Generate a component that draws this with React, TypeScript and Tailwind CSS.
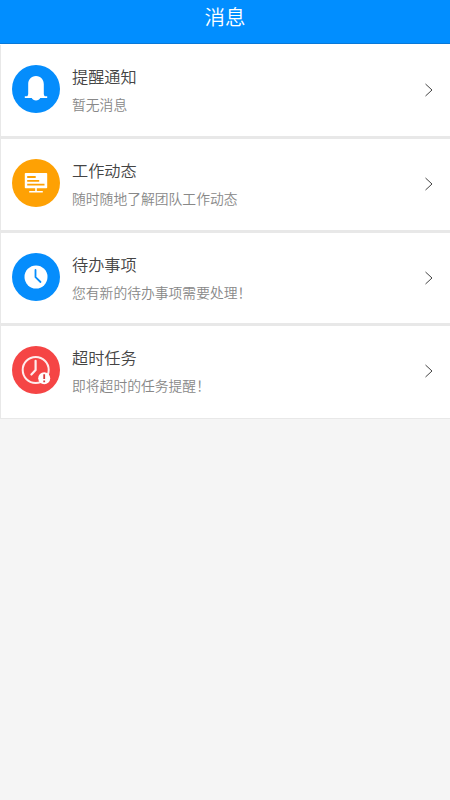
import type { ReactNode } from "react";

interface MessageProps {
    title: string;
    text: string;
    icon: ReactNode;
}

const BellIcon = () => (
    <svg className="block size-12" viewBox="0 0 48 48">
        <circle cx="24" cy="24" r="24" fill="#058dfc" />
        <path d="M24 11c-5 0-7.800 3.700-7.800 8.200v9.800c0 1-.4 1.700-1 2.200h-2.400v1.800h6.900c.8 1.500 2.300 2.400 4.300 2.400s3.500-.9 4.300-2.400H35.200v-1.800h-2.400c-.6-.5-1-1.200-1-2.200V19.200c0-4.500-2.800-8.200-7.800-8.200z" fill="#fff" />
    </svg>
);

const BoardIcon = () => (
    <svg className="block size-12" viewBox="0 0 48 48">
        <circle cx="24" cy="24" r="24" fill="#fea104" />
        <rect x="12.800" y="14" width="22.400" height="15.200" rx="0.8" fill="#fff" />
        <path d="M15.200 18h8.500M15.200 21.800h12M15.200 25.700h17.300" stroke="#fea104" strokeWidth="1.800" />
        <path d="M24 29v3.500M17.200 32.800h13.600" stroke="#fff" strokeWidth="1.600" />
    </svg>
);

const ClockIcon = () => (
    <svg className="block size-12" viewBox="0 0 48 48">
        <circle cx="24" cy="24" r="24" fill="#058dfc" />
        <circle cx="24" cy="24" r="11.500" fill="#fff" />
        <path d="M23.500 17v7.200l5 4.800" fill="none" stroke="#058dfc" strokeWidth="1.800" strokeLinecap="round" strokeLinejoin="round" />
    </svg>
);

const OvertimeIcon = () => (
    <svg className="block size-12" viewBox="0 0 48 48">
        <circle cx="24" cy="24" r="24" fill="#f54545" />
        <circle cx="23.700" cy="24" r="13" fill="none" stroke="#fff" strokeOpacity="0.9" strokeWidth="2" />
        <path d="M23.600 14.800v9.200l-4.200 4.500" fill="none" stroke="#fff" strokeOpacity="0.9" strokeWidth="2.200" strokeLinecap="round" strokeLinejoin="round" />
        <circle cx="32.200" cy="32.300" r="6" fill="#fff" />
        <path d="M32.200 28.200v4.800M32.200 34.400v1.900" stroke="#d83a3a" strokeWidth="1.800" />
    </svg>
);

const messages: MessageProps[] = [
    { title: "提醒通知", text: "暂无消息", icon: <BellIcon /> },
    { title: "工作动态", text: "随时随地了解团队工作动态", icon: <BoardIcon /> },
    { title: "待办事项", text: "您有新的待办事项需要处理！", icon: <ClockIcon /> },
    { title: "超时任务", text: "即将超时的任务提醒！", icon: <OvertimeIcon /> },
];

const MessageItem = ({ title, text, icon }: MessageProps) => {
    return (
        <li className="flex h-[93.800px] items-start border-b-[3px] border-l border-[#e8e8e8] bg-white pt-5 pr-4 pl-[11px] last:h-[93px] last:border-b">
            {icon}
            <div className="ml-3 flex-1">
                <h4 className="-mt-px text-[16.200px] leading-6 text-[#444]">{title}</h4>
                <p className="mt-1.5 text-[13.800px] leading-5 text-[#888]">{text}</p>
            </div>
            <svg className="mt-[18px] block h-[14px] w-[9px]" viewBox="0 0 9 14" fill="none" stroke="#444" strokeWidth="1">
                <path d="M.5 1l6.500 6L.5 13" />
            </svg>
        </li>
    );
};

export default function App() {
    return (
        <div className="min-h-screen bg-[#f5f5f5] font-['Noto_Sans_CJK_SC',sans-serif] font-[350]">
            <header className="flex h-11 justify-center border-b border-[#0878d8] bg-[#018eff]">
                <h1 className="text-[20.500px] leading-8 text-white">消息</h1>
            </header>
            <ul className="bg-white pt-px">
                {messages.map((message) => (
                    <MessageItem key={message.title} {...message} />
                ))}
            </ul>
        </div>
    );
}
